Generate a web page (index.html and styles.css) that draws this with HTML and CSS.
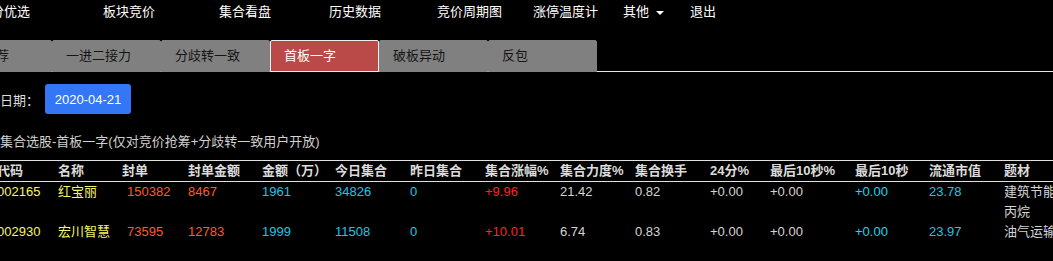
FILE: index.html
```html
<!DOCTYPE html>
<html lang="zh-CN">
<head>
<meta charset="utf-8">
<title>集合选股-首板一字</title>
<link rel="stylesheet" href="styles.css">
</head>
<body>
<div class="page">
  <nav class="nav">
    <a class="nav-item">评分优选</a>
    <a class="nav-item">板块竞价</a>
    <a class="nav-item">集合看盘</a>
    <a class="nav-item">历史数据</a>
    <a class="nav-item">竞价周期图</a>
    <a class="nav-item">涨停温度计</a>
    <a class="nav-item">其他<span class="caret"></span></a>
    <a class="nav-item">退出</a>
  </nav>

  <ul class="tabs">
    <li class="tab">每日推荐</li>
    <li class="tab">一进二接力</li>
    <li class="tab">分歧转一致</li>
    <li class="tab active">首板一字</li>
    <li class="tab">破板异动</li>
    <li class="tab">反包</li>
  </ul>

  <div class="date-row">
    <span class="date-label">日期：</span>
    <button class="date-btn">2020-04-21</button>
  </div>

  <div class="subtitle">集合选股-首板一字(仅对竞价抢筹+分歧转一致用户开放)</div>

  <table class="grid">
    <colgroup>
      <col class="w61"><col class="w64"><col class="w66"><col class="w74"><col class="w73">
      <col class="w75"><col class="w75"><col class="w75"><col class="w75"><col class="w75">
      <col class="w60"><col class="w85"><col class="w74"><col class="w75"><col class="w66">
    </colgroup>
    <thead>
      <tr>
        <th>代码</th><th>名称</th><th>封单</th><th>封单金额</th><th>金额（万）</th>
        <th>今日集合</th><th>昨日集合</th><th>集合涨幅%</th><th>集合力度%</th><th>集合换手</th>
        <th>24分%</th><th>最后10秒%</th><th>最后10秒</th><th>流通市值</th><th>题材</th>
      </tr>
    </thead>
    <tbody>
      <tr>
        <td class="yellow">002165</td><td class="yellow">红宝丽</td><td class="orange pad">150382</td><td class="orange">8467</td><td class="cyan">1961</td>
        <td class="cyan">34826</td><td class="cyan">0</td><td class="red">+9.96</td><td class="gray">21.42</td><td class="gray">0.82</td>
        <td class="gray">+0.00</td><td class="gray">+0.00</td><td class="cyan2">+0.00</td><td class="cyan">23.78</td><td class="gray">建筑节能,丙烷</td>
      </tr>
      <tr>
        <td class="yellow">002930</td><td class="yellow">宏川智慧</td><td class="orange pad">73595</td><td class="orange">12783</td><td class="cyan">1999</td>
        <td class="cyan">11508</td><td class="cyan">0</td><td class="red">+10.01</td><td class="gray">6.74</td><td class="gray">0.83</td>
        <td class="gray">+0.00</td><td class="gray">+0.00</td><td class="cyan2">+0.00</td><td class="cyan">23.97</td><td class="gray">油气运输</td>
      </tr>
    </tbody>
  </table>
</div>
</body>
</html>
```

FILE: styles.css
```css
html, body {
  margin: 0;
  padding: 0;
  background: #000;
  overflow: hidden;
}

body {
  font-family: "Liberation Sans", "Noto Sans CJK SC", sans-serif;
  font-size: 13px;
  color: #ddd;
}

.page {
  width: 1053px;
}

/* top navigation */
.nav {
  display: grid;
  grid-template-columns: 125px 116px 110px 108px 96px 90px 67px auto;
  height: 40px;
  margin-left: -22px;
  line-height: 24px;
}

.nav-item {
  color: #fff;
  white-space: nowrap;
}

.caret {
  display: inline-block;
  margin-left: 7px;
  vertical-align: middle;
  border-top: 4px solid #fff;
  border-left: 4px solid transparent;
  border-right: 4px solid transparent;
}

/* tabs */
.tabs {
  display: flex;
  list-style: none;
  margin: 0 0 0 -57px;
  padding: 0;
  height: 31px;
  border-bottom: 1px solid #e8e8e8;
}

.tab {
  box-sizing: border-box;
  width: 109px;
  height: 32px;
  padding-left: 13px;
  line-height: 30px;
  background: #808080;
  color: #151515;
  border: 1px solid #808080;
  border-radius: 2px 2px 0 0;
  white-space: nowrap;
}

.tab.active {
  background: #b94a48;
  color: #fff;
  border-color: #f0f0f0;
}

/* date row */
.date-row {
  display: flex;
  align-items: center;
  margin-top: 12px;
  height: 30px;
}

.date-label {
  color: #ddd;
  margin-right: 6px;
}

.date-btn {
  width: 86px;
  height: 30px;
  padding: 0;
  border: none;
  border-radius: 3px;
  background: #3477f6;
  color: #fff;
  font: inherit;
  font-size: 13px;
}

.subtitle {
  margin-top: 19px;
  line-height: 18px;
  color: #d0d0d0;
}

/* data table */
.grid {
  margin-top: 9px;
  margin-left: -3px;
  border-collapse: collapse;
  table-layout: fixed;
  width: 1073px;
}

.w60 { width: 60px; }
.w61 { width: 61px; }
.w64 { width: 64px; }
.w66 { width: 66px; }
.w73 { width: 73px; }
.w74 { width: 74px; }
.w75 { width: 75px; }
.w85 { width: 85px; }

.grid th {
  text-align: left;
  font-weight: bold;
  color: #dcdcdc;
  padding: 0;
  height: 20px;
  line-height: 20px;
  white-space: nowrap;
  border-top: 1px solid #e0e0e0;
  border-bottom: 1px solid #e0e0e0;
}

.grid td {
  padding: 0;
  line-height: 20px;
  vertical-align: top;
  text-align: left;
}

.grid td.pad {
  padding-left: 5px;
}

.yellow { color: #f6f66a; }
.orange { color: #ff5a2a; }
.cyan { color: #1ec6e6; }
.cyan2 { color: #10dcf4; }
.red { color: #ff2424; }
.gray { color: #d4d4d4; }
```
